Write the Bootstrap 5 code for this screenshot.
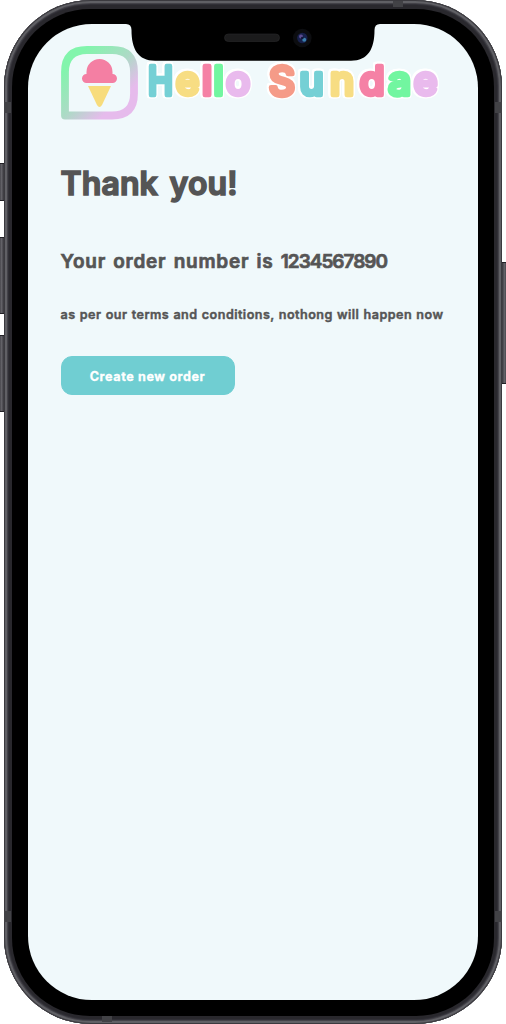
<!DOCTYPE html>
<html lang="en">
<head>
<meta charset="utf-8">
<meta name="viewport" content="width=device-width, initial-scale=1">
<title>Hello Sundae</title>
<link href="https://cdn.jsdelivr.net/npm/bootstrap@5.3.0/dist/css/bootstrap.min.css" rel="stylesheet">
<style>
  body { background: #fff; font-family: Inter, "Open Sans", sans-serif; color: #555; }
  .stage { width: 506px; height: 1024px; padding: 0 4px; }
  .frame { height: 1024px; padding: 9px 8px 8px; border-radius: 87px;
    background: #29282d;
    box-shadow: inset 0 0 0 1px #3b3a3f, inset 0 0 0 3px #606065, inset 0 0 0 4px #434248, inset 0 0 0 5px #302f36; }
  .bezel { padding: 15px 16px 16px 15.5px; background: #000; border-radius: 78px; }
  .screen { background: #f0f9fb; border-radius: 64px; padding: 22px 30px 0 33px; }
  .side-key { width: 5px; background: linear-gradient(90deg, #37363b, #626167 50%, #37363b); border: solid #222126; border-width: 1px 0; }
  .band { background: #424246; }
  .notch { left: 120px; top: 20px; }
  .logo { width: 386px; height: 76px; margin-bottom: 42px; overflow: visible; }
  .wordmark { font: 500 40px Inter, sans-serif; stroke-width: 4.6; stroke-linejoin: round; text-anchor: middle;
    filter: drop-shadow(1.2px 0 0 #fff) drop-shadow(-1.2px 0 0 #fff) drop-shadow(0 1.2px 0 #fff) drop-shadow(0 -1.2px 0 #fff); }
  .t1, .t2, .t3, .cta { white-space: nowrap; }
  .t1 { font-size: 32px; line-height: 40px; font-weight: 600; margin-bottom: 45px; -webkit-text-stroke: 1.6px currentColor; word-spacing: 3.5px; letter-spacing: .1px; }
  .t2 { font-size: 19px; line-height: 26px; font-weight: 600; margin-bottom: 30px; letter-spacing: .75px; word-spacing: 1.8px; -webkit-text-stroke: .7px currentColor; }
  .digits { letter-spacing: -1px; }
  .t3 { font-size: 12.6px; line-height: 20px; font-weight: 600; margin-bottom: 31px; -webkit-text-stroke: .45px currentColor; letter-spacing: .46px; word-spacing: .6px; }
  .cta { --bs-btn-bg: #70ced2; --bs-btn-color: #fff; --bs-btn-border-color: #70ced2; width: 174px; height: 39px; border-radius: 11px; font-size: 12.6px; font-weight: 700; -webkit-text-stroke: .3px currentColor; letter-spacing: .6px; }
</style>
</head>
<body>
<main class="stage position-relative overflow-hidden">
  <i class="side-key position-absolute" style="left:-1px;top:163px;height:38px"></i>
  <i class="side-key position-absolute" style="left:-1px;top:237px;height:77px"></i>
  <i class="side-key position-absolute" style="left:-1px;top:335px;height:77px"></i>
  <i class="side-key position-absolute" style="left:502px;top:262px;height:122px"></i>
  <div class="frame">
    <div class="bezel h-100">
      <div class="screen h-100">
        <svg class="logo d-block" viewBox="61 46 386 76" role="img" aria-label="Hello Sundae">
          <defs>
            <linearGradient id="ring" x1="0" y1="0" x2="1" y2="1">
              <stop offset=".14" stop-color="#82f5ac"/><stop offset=".5" stop-color="#addac6"/><stop offset=".78" stop-color="#e6bbec"/>
            </linearGradient>
          </defs>
          <path d="M65 115.500V72Q65 50 87 50H112Q134 50 134 72V93.500Q134 115.500 112 115.500Z" fill="none" stroke="url(#ring)" stroke-width="7.800" stroke-linejoin="round"/>
          <path d="M86.500 74V72a13 13 0 0 1 26 0v2a4.500 4.500 0 0 1 0 9h-26a4.500 4.500 0 0 1 0-9Z" fill="#f47fa3"/>
          <path d="M88 86H111L102 105Q99.500 109 97 105Z" fill="#f7dc7c"/>
          <g class="wordmark">
            <text transform="translate(160.500 95.200) scale(.84 1)" fill="#75d0d5" stroke="#75d0d5">H</text>
            <text y="95.200"><tspan x="187.500" fill="#f7dd83" stroke="#f7dd83">e</tspan><tspan x="207" fill="#f581a5" stroke="#f581a5">l</tspan><tspan x="218.500" fill="#72f6a0" stroke="#72f6a0">l</tspan><tspan x="238" fill="#e9baed" stroke="#e9baed">o</tspan></text>
            <text y="95.200"><tspan x="282" fill="#f59b88" stroke="#f59b88">S</tspan><tspan x="311.500" fill="#75d0d5" stroke="#75d0d5">u</tspan><tspan x="342" fill="#f7dd83" stroke="#f7dd83">n</tspan><tspan x="372" fill="#f581a5" stroke="#f581a5">d</tspan><tspan x="399.500" fill="#72f6a0" stroke="#72f6a0">a</tspan><tspan x="425.500" fill="#e9baed" stroke="#e9baed">e</tspan></text>
          </g>
        </svg>
        <h1 class="t1">Thank you!</h1>
        <h2 class="t2">Your order number is <span class="digits">1234567890</span></h2>
        <p class="t3">as per our terms and conditions, nothong will happen now</p>
        <button type="button" class="btn cta d-flex align-items-center justify-content-center p-0 pt-1">Create new order</button>
      </div>
    </div>
  </div>
  <i class="band position-absolute" style="left:4px;top:102px;width:7px;height:11px"></i>
  <i class="band position-absolute" style="left:495px;top:102px;width:7px;height:11px"></i>
  <i class="band position-absolute" style="left:4px;top:911px;width:7px;height:11px"></i>
  <i class="band position-absolute" style="left:495px;top:911px;width:7px;height:11px"></i>
  <i class="band position-absolute" style="left:393px;top:1px;width:10px;height:6px"></i>
  <i class="band position-absolute" style="left:102px;top:1016px;width:10px;height:6px"></i>
  <svg class="notch position-absolute" width="266" height="44" viewBox="120 20 266 44" aria-hidden="true">
    <path d="M120 20V24H126Q131.500 24 131.500 30C131.500 49 138 60.700 155 60.700H351C368 60.700 374.500 49 374.500 30Q374.500 24 380 24H386V20Z"/>
    <rect x="224.500" y="34" width="55" height="7.500" rx="3.750" fill="#1b1b1c" stroke="#2a2a2c" stroke-width=".6"/>
    <circle cx="302.300" cy="38" r="9.300" fill="#0c0d10"/>
    <circle cx="302.300" cy="38" r="5.200" fill="#17204a"/>
    <circle cx="301" cy="36.500" r="2" fill="#5b4b91"/>
    <circle cx="304.200" cy="39.700" r="2" fill="#3b80ad"/>
    <circle cx="302.300" cy="38" r="1.300" fill="#101738"/>
  </svg>
</main>
<script src="https://cdn.jsdelivr.net/npm/bootstrap@5.3.0/dist/js/bootstrap.bundle.min.js"></script>
</body>
</html>
